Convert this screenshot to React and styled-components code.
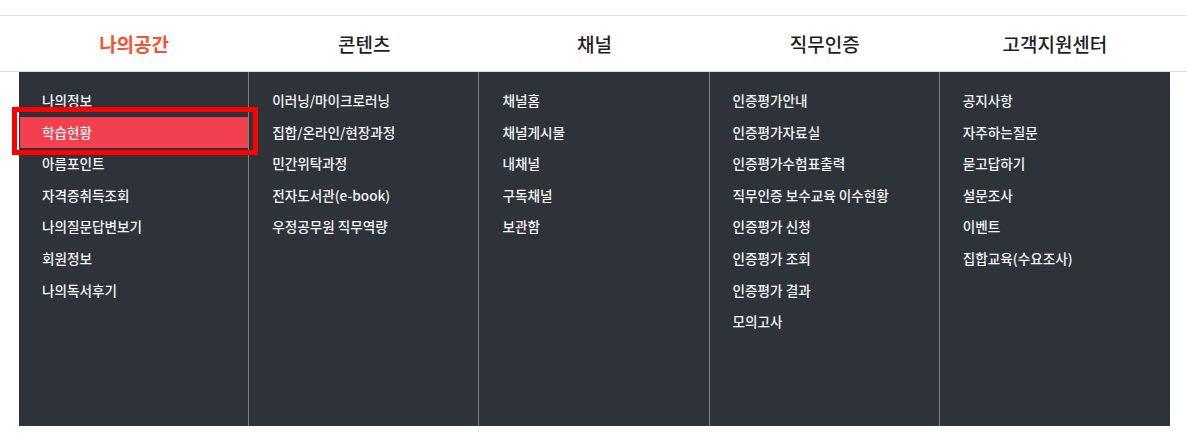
import styled, { createGlobalStyle } from 'styled-components';

const GlobalStyle = createGlobalStyle`
  * {
    box-sizing: border-box;
  }
  body {
    margin: 0;
    background: #fff;
    font-family: 'Noto Sans CJK KR', 'Noto Sans', sans-serif;
  }
  ul {
    list-style: none;
    margin: 0;
    padding: 0;
  }
`;

const MENUS = [
  {
    title: '나의공간',
    items: ['나의정보', '학습현황', '아름포인트', '자격증취득조회', '나의질문답변보기', '회원정보', '나의독서후기'],
  },
  {
    title: '콘텐츠',
    items: ['이러닝/마이크로러닝', '집합/온라인/현장과정', '민간위탁과정', '전자도서관(e-book)', '우정공무원 직무역량'],
  },
  {
    title: '채널',
    items: ['채널홈', '채널게시물', '내채널', '구독채널', '보관함'],
  },
  {
    title: '직무인증',
    items: [
      '인증평가안내',
      '인증평가자료실',
      '인증평가수험표출력',
      '직무인증 보수교육 이수현황',
      '인증평가 신청',
      '인증평가 조회',
      '인증평가 결과',
      '모의고사',
    ],
  },
  {
    title: '고객지원센터',
    items: ['공지사항', '자주하는질문', '묻고답하기', '설문조사', '이벤트', '집합교육(수요조사)'],
  },
];

const Page = styled.div`
  padding-top: 15px;
`;

const Header = styled.nav`
  border-top: 1px solid #e2e2e2;
  border-bottom: 1px solid #dcdcdc;
`;

const Inner = styled.div`
  width: 1151px;
  margin-left: 19px;
  display: grid;
  grid-template-columns: repeat(5, 1fr);
`;

const TopLink = styled.a`
  display: flex;
  align-items: center;
  justify-content: center;
  height: 55px;
  font-size: 19px;
  font-weight: ${({ $active }) => ($active ? 700 : 500)};
  color: ${({ $active }) => ($active ? '#f4512f' : '#1e1e1e')};
  text-decoration: none;
`;

const Panel = styled(Inner)`
  background: #2e333a;
  height: 354px;
`;

const Column = styled.ul`
  padding-top: 13px;
  border-right: ${({ $last }) => ($last ? 'none' : '1px solid #7b7e83')};
`;

const Item = styled.li`
  position: relative;
  margin-left: ${({ $on }) => ($on ? '1px' : '0')};
  padding: 8px 0 8px ${({ $on }) => ($on ? '22px' : '23px')};
  font-size: 13.6px;
  line-height: 15.6px;
  font-weight: 500;
  color: #f4f4f4;
  background: ${({ $on }) => ($on ? '#f2404e' : 'transparent')};
  white-space: nowrap;

  ${({ $on }) =>
    $on &&
    `
    &::after {
      content: '';
      position: absolute;
      top: -10px;
      left: -8px;
      right: -10px;
      bottom: -7px;
      border: 5px solid #ff0000;
    }
  `}
`;

export default function App() {
  return (
    <Page>
      <GlobalStyle />
      <Header>
        <Inner>
          {MENUS.map((m, i) => (
            <TopLink key={m.title} href="#" $active={i === 0}>
              {m.title}
            </TopLink>
          ))}
        </Inner>
      </Header>
      <Panel>
        {MENUS.map((m, i) => (
          <Column key={m.title} $last={i === MENUS.length - 1}>
            {m.items.map((item) => (
              <Item key={item} $on={item === '학습현황'}>
                {item}
              </Item>
            ))}
          </Column>
        ))}
      </Panel>
    </Page>
  );
}
